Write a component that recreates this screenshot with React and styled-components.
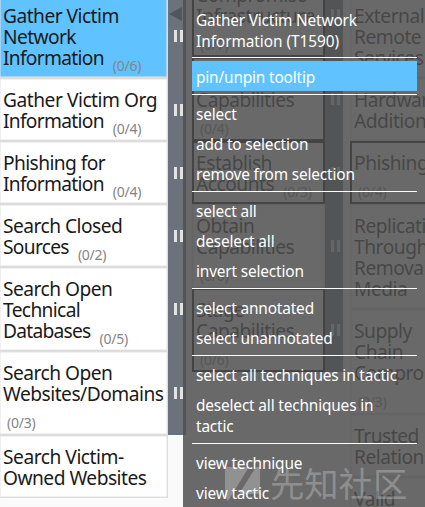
import React from 'react';
import styled, { createGlobalStyle } from 'styled-components';

const Global = createGlobalStyle`
  * { box-sizing: border-box; }
  body { margin: 0; background: #fafafa; overflow: hidden; }
`;

const Page = styled.div`
  position: relative;
  width: 425px;
  height: 507px;
  overflow: hidden;
  background: #fafafa;
  font-family: 'Noto Sans', 'Open Sans', sans-serif;
  color: #1a1a1a;
`;

const Matrix = styled.div`
  display: flex;
  align-items: flex-start;
`;

const Column = styled.div`
  flex: none;
  display: flex;
  flex-direction: column;
  width: ${(p) => p.$width}px;
  margin: ${(p) => p.$top}px 0 0 ${(p) => p.$left}px;
`;

const Row = styled.div`
  display: flex;
  height: ${(p) => p.$height}px;
`;

const Cell = styled.div`
  flex: 1;
  min-width: 0;
  padding: 10px 0 0 3px;
  border: solid ${(p) => (p.$dark ? '#000' : '#ddd')};
  border-width: 1px 1px 1px ${(p) => (p.$flush ? 0 : 1)}px;
  outline: ${(p) => (p.$dark ? '1px solid #111' : 'none')};
  outline-offset: -2px;
  background: ${(p) => (p.$active ? '#60c3ff' : '#fff')};
  box-shadow: ${(p) => (p.$dark ? 'none' : 'inset 0 0 0 0.5px #e4e4e4')};
  font-size: 19.2px;
  line-height: 21px;
  white-space: nowrap;
`;

const Line = styled.div`
  height: 21px;
  letter-spacing: ${(p) => p.$spacing || 0}px;
`;

const Count = styled.span`
  margin-left: ${(p) => (p.$wrapped ? 4 : 9)}px;
  font-size: 14px;
  line-height: 0;
  letter-spacing: -0.25px;
  vertical-align: -6px;
  color: #858585;
`;

const Handle = styled.div`
  flex: none;
  display: flex;
  align-items: center;
  justify-content: flex-end;
  gap: 3px;
  width: 18px;
  padding-right: 3px;
  background: ${(p) => (p.$empty ? 'transparent' : '#6b727c')};
`;

const Grip = styled.i`
  width: 3px;
  height: 12px;
  background: #e3e3e3;
`;

const Collapse = styled.svg`
  position: absolute;
  left: 169px;
  top: 7px;
`;

const Menu = styled.div`
  position: absolute;
  left: 183px;
  top: 0;
  width: 242px;
  height: 507px;
  padding: 5px 8px 0 9px;
  background: rgba(79, 79, 79, 0.85);
  color: #fff;
  font-size: 15.4px;
  line-height: 21px;
  white-space: nowrap;
`;

const Heading = styled.div`
  padding: 5px 0 2px 4px;
`;

const Item = styled.div`
  padding: 6px 0 3px 4px;
  background: ${(p) => (p.$active ? '#60c3ff' : 'transparent')};
`;

const Rule = styled.div`
  height: 1px;
  margin: 3px 0;
  background: #fff;
`;

const Watermark = styled.div`
  position: absolute;
  left: 225px;
  top: 461px;
  display: flex;
  align-items: center;
  gap: 10px;
  color: rgba(255, 255, 255, 0.27);
  font: 34.3px/42px 'Noto Sans CJK SC', sans-serif;
  white-space: nowrap;
`;

const Logo = styled.svg`
  margin-top: 5px;
`;

const left = [
  { h: 84, lines: [['Gather Victim', -0.53], ['Network', -0.6], ['Information', -0.7]], n: '(0/6)', active: true },
  { h: 63, lines: [['Gather Victim Org'], ['Information', -0.7]], n: '(0/4)' },
  { h: 63, lines: [['Phishing for', -0.6], ['Information', -0.7]], n: '(0/4)' },
  { h: 63, lines: [['Search Closed', -0.53], ['Sources', -0.7]], n: '(0/2)' },
  { h: 84, lines: [['Search Open', -0.53], ['Technical', -0.65], ['Databases', -0.75]], n: '(0/5)' },
  { h: 84, lines: [['Search Open', -0.53], ['Websites/Domains', -0.51]], n: '(0/3)', wrap: true },
  { h: 63, lines: [['Search Victim-'], ['Owned Websites', -0.52]] },
];

const middle = [
  { h: 84, lines: [['Compromise'], ['Infrastructure']], n: '(0/7)', wrap: true, dark: true },
  { h: 84, lines: [['Develop'], ['Capabilities']], n: '(0/4)', wrap: true, dark: true },
  { h: 63, lines: [['Establish'], ['Accounts']], n: '(0/3)', dark: true },
  { h: 84, lines: [['Obtain'], ['Capabilities']], n: '(0/6)', wrap: true },
  { h: 84, lines: [['Stage'], ['Capabilities']], n: '(0/6)', wrap: true, dark: true },
];

const right = [
  { h: 84, lines: [['External'], ['Remote'], ['Services']] },
  { h: 63, lines: [['Hardware'], ['Additions']] },
  { h: 63, lines: [['Phishing']], n: '(0/4)', wrap: true, dark: true },
  { h: 105, lines: [['Replication'], ['Through'], ['Removable'], ['Media']] },
  { h: 105, lines: [['Supply'], ['Chain'], ['Compromise']], n: '(0/3)', wrap: true },
  { h: 63, lines: [['Trusted'], ['Relationship']] },
  { h: 63, lines: [['Valid'], ['Accounts']] },
];

const menu = [
  [['pin/unpin tooltip']],
  [['select'], ['add to selection'], ['remove from selection']],
  [['select all'], ['deselect all'], ['invert selection']],
  [['select annotated'], ['select unannotated']],
  [['select all techniques in tactic'], ['deselect all techniques in', 'tactic']],
  [['view technique'], ['view tactic']],
];

function Tactic({ cells, width, offset, top, flush }) {
  return (
    <Column $width={width} $left={offset} $top={top}>
      {cells.map((c, i) => (
        <Row key={i} $height={c.h}>
          <Cell $dark={c.dark} $active={c.active} $flush={flush}>
            {c.lines.map(([text, spacing = -0.48], j) => (
              <Line key={j} $spacing={spacing}>
                {text}
                {c.n && !c.wrap && j === c.lines.length - 1 && <Count>{c.n}</Count>}
              </Line>
            ))}
            {c.wrap && <Line><Count $wrapped>{c.n}</Count></Line>}
          </Cell>
          <Handle $empty={!c.n}>
            {c.n && <><Grip /><Grip /></>}
          </Handle>
        </Row>
      ))}
    </Column>
  );
}

export default function App() {
  return (
    <Page>
      <Global />
      <Matrix>
        <Tactic cells={left} width={186} offset={0} top={-6} flush />
        <Tactic cells={middle} width={151} offset={6} top={-27} />
        <Tactic cells={right} width={160} offset={7} top={-6} />
      </Matrix>
      <Collapse width="14" height="14" viewBox="0 0 14 14">
        <path d="M0 7L13 0V14Z" fill="#51565d" />
      </Collapse>
      <Menu>
        <Heading>
          <Line $spacing={-0.17}>Gather Victim Network</Line>
          <Line $spacing={-0.05}>Information (T1590)</Line>
        </Heading>
        {menu.map((group, i) => (
          <React.Fragment key={i}>
            <Rule />
            {group.map((lines) => (
              <Item key={lines[0]} $active={i === 0}>
                {lines.map((t) => <Line key={t} $spacing={-0.16}>{t}</Line>)}
              </Item>
            ))}
          </React.Fragment>
        ))}
      </Menu>
      <Watermark>
        <Logo width="35" height="35" viewBox="0 0 35 35" fill="currentColor">
          <path d="M0 0H24L3 34L0 30Z" />
          <path d="M31 0H35V27H14Z" />
        </Logo>
        先知社区
      </Watermark>
    </Page>
  );
}
